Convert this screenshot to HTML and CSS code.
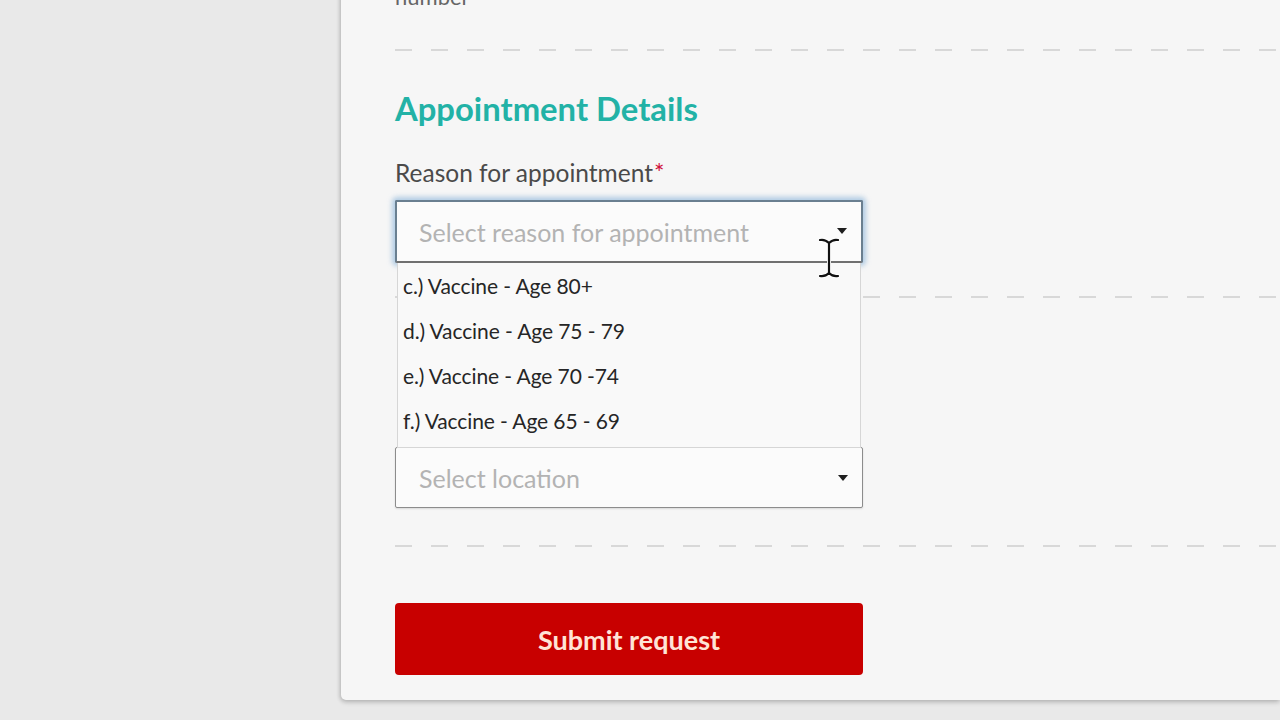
FILE: index.html
```html
<!DOCTYPE html>
<html lang="en">
<head>
<meta charset="utf-8">
<title>Appointment Details</title>
<link rel="stylesheet" href="styles.css">
</head>
<body>
<div class="page">
  <div class="side"></div>
  <main class="card">
    <div class="prev">number</div>
    <div class="divider"></div>

    <h2 class="section-title">Appointment Details</h2>

    <div class="field">
      <label class="label">Reason for appointment<span class="req">*</span></label>
      <div class="select-wrap">
        <div class="select focused">
          <span class="placeholder">Select reason for appointment</span>
          <span class="caret"></span>
        </div>
        <ul class="dropdown">
          <li>c.) Vaccine - Age 80+</li>
          <li>d.) Vaccine - Age 75 - 79</li>
          <li>e.) Vaccine - Age 70 -74</li>
          <li>f.) Vaccine - Age 65 - 69</li>
        </ul>
        <svg class="cursor" width="24" height="42" viewBox="0 0 24 42" aria-hidden="true">
          <path d="M3 3 Q8 2 12 6 Q16 2 21 3 M12 6 V36 M3 39 Q8 40 12 36 Q16 40 21 39" fill="none" stroke="#fff" stroke-width="4" stroke-linecap="round"/>
          <path d="M3 3 Q8 2 12 6 Q16 2 21 3 M12 6 V36 M3 39 Q8 40 12 36 Q16 40 21 39" fill="none" stroke="#111" stroke-width="2.2" stroke-linecap="round"/>
        </svg>
      </div>
    </div>

    <div class="divider d2"></div>

    <div class="field loc">
      <div class="select plain">
        <span class="placeholder">Select location</span>
        <span class="caret"></span>
      </div>
    </div>

    <div class="divider d3"></div>

    <button class="submit" type="button">Submit request</button>
  </main>
</div>
</body>
</html>
```

FILE: styles.css
```css
* { box-sizing: border-box; }

html, body {
  margin: 0;
  height: 720px;
  overflow: hidden;
}

body {
  background: #e9e9e9;
  font-family: Lato, "Open Sans", sans-serif;
  color: #444;
}

.page {
  display: flex;
  height: 720px;
}

.side {
  width: 341px;
  flex: none;
}

.card {
  flex: 1;
  align-self: flex-start;
  margin-top: -15px;
  background: #f6f6f6;
  border-radius: 5px 0 0 5px;
  box-shadow: -1px 1px 4px rgba(0, 0, 0, 0.18), 0 3px 5px rgba(0, 0, 0, 0.10);
  padding: 0 0 25px 54px;
}

.prev {
  font-size: 22px;
  line-height: 23px;
  color: #666;
}

.divider {
  height: 2px;
  margin-top: 41px;
  background: repeating-linear-gradient(90deg, #d8d8d8 0 17px, transparent 17px 36px);
}

.d2 { margin-top: 33px; }
.d3 { margin-top: 37px; }

.section-title {
  margin: 39px 0 0;
  font-size: 32.8px;
  line-height: 37px;
  font-weight: 700;
  color: #22b2a6;
  letter-spacing: 0;
}

.field {
  width: 468px;
  margin-top: 32px;
}

.field.loc {
  margin-top: 149px;
}

.label {
  display: block;
  font-size: 24.5px;
  line-height: 28px;
  color: #4a4a4a;
  letter-spacing: 0;
  margin-bottom: 13px;
}

.req {
  color: #d0103a;
  margin-left: 1px;
}

.select-wrap {
  position: relative;
}

.select {
  display: flex;
  align-items: center;
  justify-content: space-between;
  height: 61px;
  padding: 0 14px 0 23px;
  background: #fbfbfb;
  border: 1px solid #8c8c8c;
  border-radius: 2px;
  box-shadow: 0 1px 2px rgba(0, 0, 0, 0.12);
}

.select.focused {
  height: 63px;
  border: 2px solid #6a7f90;
  border-bottom-color: #707070;
  padding-left: 22px;
  box-shadow: 0 0 5px 3px rgba(130, 175, 215, 0.6);
}

.placeholder {
  font-size: 25px;
  color: #b3b3b3;
  letter-spacing: 0;
}

.caret {
  width: 0;
  height: 0;
  border-left: 5px solid transparent;
  border-right: 5px solid transparent;
  border-top: 6px solid #1e1e1e;
}

.select.focused .caret {
  margin-top: -2px;
}

.dropdown {
  position: absolute;
  left: 2px;
  right: 2px;
  top: 63px;
  z-index: 2;
  margin: 0;
  padding: 0 0 4px;
  list-style: none;
  background: #f9f9f9;
  border: 1px solid #d6d6d6;
  border-top: none;
}

.dropdown li {
  height: 45px;
  line-height: 45px;
  padding-left: 5px;
  font-size: 21px;
  color: #262626;
  letter-spacing: -0.1px;
}

.cursor {
  position: absolute;
  left: 422px;
  top: 37px;
  z-index: 3;
}

.submit {
  display: block;
  width: 468px;
  height: 72px;
  margin-top: 56px;
  border: none;
  border-radius: 4px;
  background: #c80000;
  color: #ffe4d6;
  font-family: Lato, "Open Sans", sans-serif;
  font-size: 27px;
  font-weight: 700;
  letter-spacing: 0;
}
```
